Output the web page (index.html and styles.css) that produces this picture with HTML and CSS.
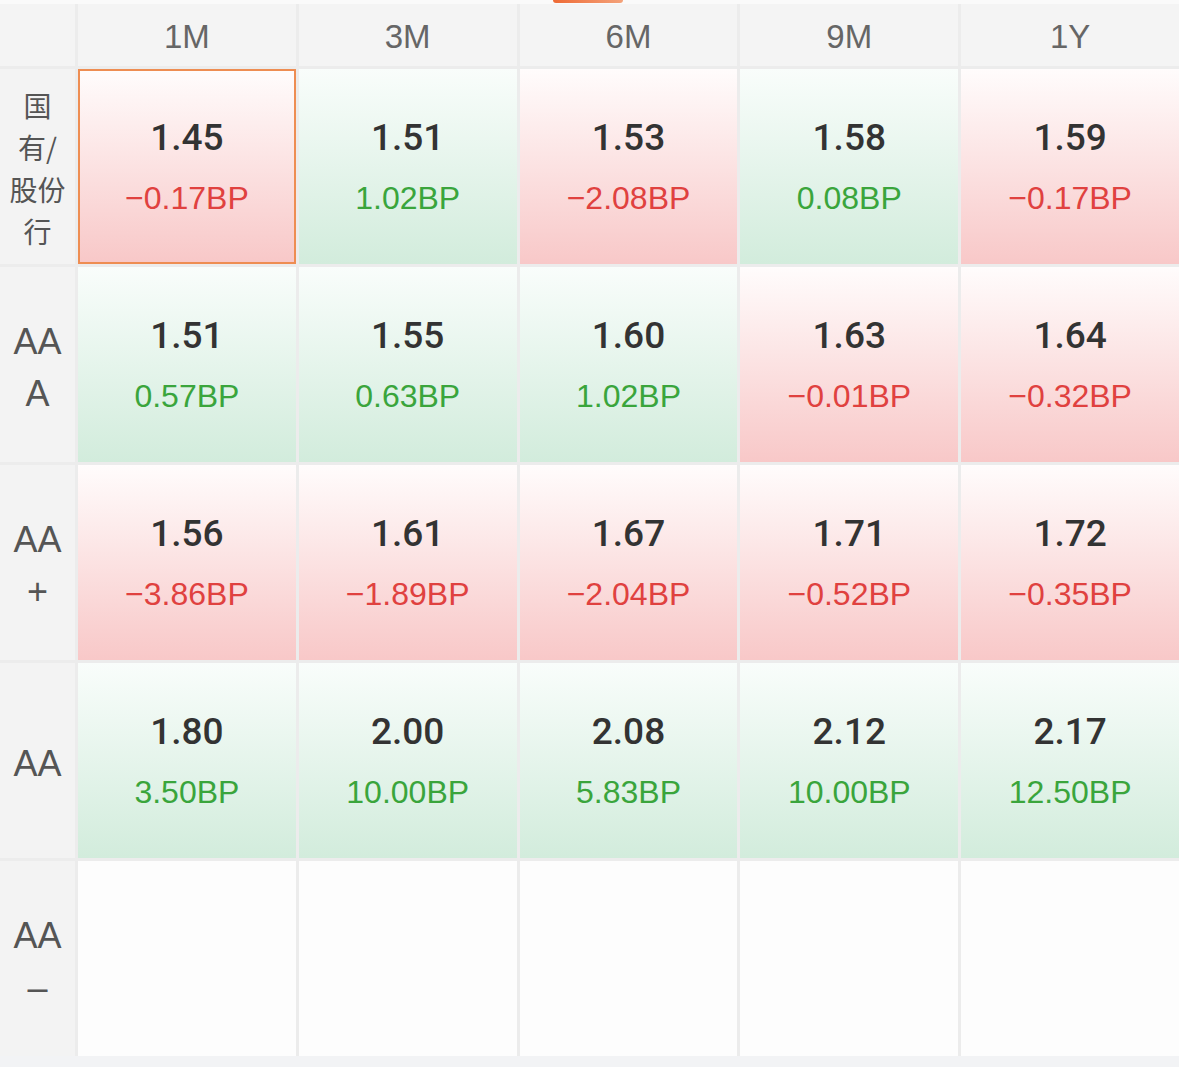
FILE: index.html
```html
<!DOCTYPE html>
<html lang="zh-CN">
<head>
    <meta charset="UTF-8">
    <meta name="viewport" content="width=device-width, initial-scale=1.0">
    <title>同业存单收益率</title>
    <link rel="stylesheet" href="styles.css">
</head>
<body>
    <div class="top-strip"><span class="tab-bar"></span></div>
    <div class="table">
        <div class="head corner"></div>
        <div class="head">1M</div>
        <div class="head">3M</div>
        <div class="head">6M</div>
        <div class="head">9M</div>
        <div class="head">1Y</div>

        <div class="label cn">国<br>有/<br>股份<br>行</div>
        <div class="cell down selected"><span class="value">1.45</span><span class="change">−0.17BP</span></div>
        <div class="cell up"><span class="value">1.51</span><span class="change">1.02BP</span></div>
        <div class="cell down"><span class="value">1.53</span><span class="change">−2.08BP</span></div>
        <div class="cell up"><span class="value">1.58</span><span class="change">0.08BP</span></div>
        <div class="cell down"><span class="value">1.59</span><span class="change">−0.17BP</span></div>

        <div class="label">AA<br>A</div>
        <div class="cell up"><span class="value">1.51</span><span class="change">0.57BP</span></div>
        <div class="cell up"><span class="value">1.55</span><span class="change">0.63BP</span></div>
        <div class="cell up"><span class="value">1.60</span><span class="change">1.02BP</span></div>
        <div class="cell down"><span class="value">1.63</span><span class="change">−0.01BP</span></div>
        <div class="cell down"><span class="value">1.64</span><span class="change">−0.32BP</span></div>

        <div class="label">AA<br>+</div>
        <div class="cell down"><span class="value">1.56</span><span class="change">−3.86BP</span></div>
        <div class="cell down"><span class="value">1.61</span><span class="change">−1.89BP</span></div>
        <div class="cell down"><span class="value">1.67</span><span class="change">−2.04BP</span></div>
        <div class="cell down"><span class="value">1.71</span><span class="change">−0.52BP</span></div>
        <div class="cell down"><span class="value">1.72</span><span class="change">−0.35BP</span></div>

        <div class="label">AA</div>
        <div class="cell up"><span class="value">1.80</span><span class="change">3.50BP</span></div>
        <div class="cell up"><span class="value">2.00</span><span class="change">10.00BP</span></div>
        <div class="cell up"><span class="value">2.08</span><span class="change">5.83BP</span></div>
        <div class="cell up"><span class="value">2.12</span><span class="change">10.00BP</span></div>
        <div class="cell up"><span class="value">2.17</span><span class="change">12.50BP</span></div>

        <div class="label">AA<br>–</div>
        <div class="cell empty"></div>
        <div class="cell empty"></div>
        <div class="cell empty"></div>
        <div class="cell empty"></div>
        <div class="cell empty"></div>
    </div>
    <div class="bottom-strip"></div>
</body>
</html>
```

FILE: styles.css
```css
body {
    margin: 0;
    background: #f4f5f7;
    font-family: "Liberation Sans", Arial, "Noto Sans CJK SC", sans-serif;
    overflow: hidden;
}
.top-strip {
    height: 4px;
    background: #fafafa;
    position: relative;
}
.tab-bar {
    position: absolute;
    left: 553px;
    top: 0;
    width: 70px;
    height: 3px;
    border-radius: 0 0 3px 3px;
    background: linear-gradient(to right, #ee6a35, #f4a27a);
}
.table {
    display: grid;
    grid-template-columns: 75px repeat(5, 1fr);
    grid-template-rows: 62px repeat(5, 195px);
    gap: 3px;
    background: #ececec;
}
.head {
    background: #f4f4f4;
    color: #666;
    font-size: 33px;
    display: flex;
    align-items: center;
    justify-content: center;
    padding-top: 4px;
}
.label {
    background: #f3f3f3;
    color: #555;
    font-size: 36px;
    line-height: 52px;
    text-align: center;
    display: flex;
    align-items: center;
    justify-content: center;
    padding-top: 6px;
}
.label.cn {
    font-size: 28px;
    line-height: 42px;
    font-family: "Noto Sans CJK SC", sans-serif;
    padding-top: 2px;
}
.cell {
    display: flex;
    flex-direction: column;
    align-items: center;
    justify-content: center;
    gap: 16px;
    box-sizing: border-box;
    padding-top: 2px;
}
.cell.up {
    background: linear-gradient(to bottom, #f9fdfb, #d2ecdc);
}
.cell.down {
    background: linear-gradient(to bottom, #fffcfc, #f8c8c8);
}
.cell.empty {
    background: #fdfdfd;
}
.cell.selected {
    border: 2px solid #ee8d52;
}
.value {
    font-family: Roboto, "Liberation Sans", sans-serif;
    font-weight: 500;
    font-size: 37px;
    line-height: 44px;
    color: #333;
}
.change {
    font-size: 32px;
    line-height: 44px;
}
.up .change { color: #3aa53c; }
.down .change { color: #e0413f; }
.bottom-strip {
    height: 11px;
    background: #f2f3f5;
}
```
